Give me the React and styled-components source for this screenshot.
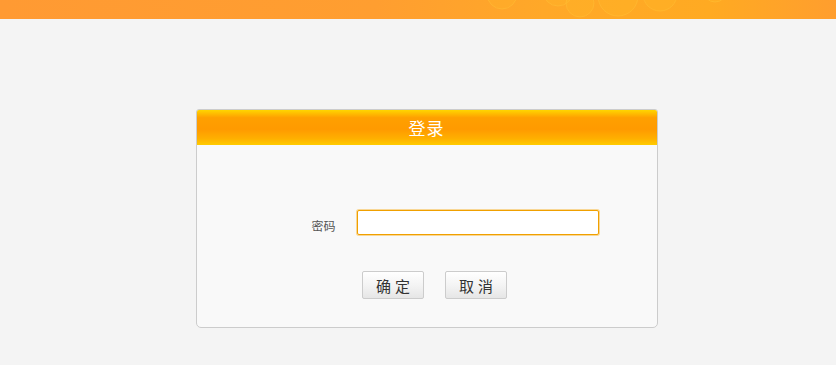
import React from "react";
import styled, { createGlobalStyle } from "styled-components";

const GlobalStyle = createGlobalStyle`
  html, body {
    margin: 0;
    padding: 0;
    background: #f4f4f4;
    font-family: "Liberation Sans", "Noto Sans CJK SC", sans-serif;
  }
`;

const Page = styled.div`
  min-height: 365px;
  background: #f4f4f4;
`;

const TopBar = styled.div`
  position: relative;
  height: 19px;
  overflow: hidden;
  background: linear-gradient(to right, #ff9a33 0%, #ff9e30 45%, #ffa828 65%, #ffaa22 85%, #ff9e2e 100%);
`;

const Bubbles = styled.svg`
  position: absolute;
  left: 440px;
  top: 0;
`;

const Main = styled.div`
  display: flex;
  justify-content: center;
  padding: 90px 0 0 17px;
`;

const Card = styled.div`
  width: 460px;
  border: 1px solid #cccccc;
  border-radius: 3px 3px 5px 5px;
  background: #f9f9f9;
  overflow: hidden;
`;

const CardHeader = styled.div`
  height: 35px;
  display: flex;
  align-items: center;
  justify-content: center;
  background: linear-gradient(#ffd600 0%, #ffa000 22%, #ff9a00 55%, #ffb000 82%, #ffcc00 100%);
  color: #ffffff;
  font-size: 17px;
  letter-spacing: 1px;
`;

const CardBody = styled.div`
  display: flex;
  flex-direction: column;
  align-items: center;
  padding: 64px 0 28px;
`;

const FieldRow = styled.div`
  display: flex;
  align-items: center;
  gap: 20px;
  margin-left: 58px;
`;

const Label = styled.label`
  font-size: 12px;
  color: #555555;
  padding-top: 5px;
`;

const Input = styled.input`
  box-sizing: border-box;
  width: 242px;
  height: 25px;
  margin: 1px;
  border: 1px solid #f0a000;
  box-shadow: 0 0 0 1px rgba(248, 188, 70, 0.55);
  border-radius: 2px;
  background: #ffffff;
  outline: none;
  padding: 0 6px;
`;

const Actions = styled.div`
  display: flex;
  gap: 21px;
  margin-top: 35px;
  margin-left: 16px;
`;

const Button = styled.button`
  box-sizing: border-box;
  width: 62px;
  height: 28px;
  border: 1px solid #cccccc;
  border-radius: 2px;
  background: linear-gradient(#ffffff 0%, #f4f4f4 50%, #e6e6e6 100%);
  color: #333333;
  font-family: "Liberation Sans", "Noto Sans CJK SC", sans-serif;
  font-size: 15px;
  letter-spacing: 4px;
  padding: 0 0 0 4px;
  cursor: pointer;
`;

const App = () => (
  <Page>
    <GlobalStyle />
    <TopBar>
      <Bubbles width="300" height="19" viewBox="0 0 300 19">
        <g fill="#ffc02a" fillOpacity="0.22" stroke="#ffc840" strokeOpacity="0.35">
          <circle cx="62" cy="-6" r="15" />
          <circle cx="118" cy="-9" r="15" />
          <circle cx="140" cy="3" r="14" />
          <circle cx="178" cy="-4" r="20" />
          <circle cx="220" cy="-6" r="17" />
          <circle cx="275" cy="-10" r="12" />
        </g>
      </Bubbles>
    </TopBar>
    <Main>
      <Card>
        <CardHeader>登录</CardHeader>
        <CardBody>
          <FieldRow>
            <Label>密码</Label>
            <Input type="password" />
          </FieldRow>
          <Actions>
            <Button>确定</Button>
            <Button>取消</Button>
          </Actions>
        </CardBody>
      </Card>
    </Main>
  </Page>
);

export default App;
